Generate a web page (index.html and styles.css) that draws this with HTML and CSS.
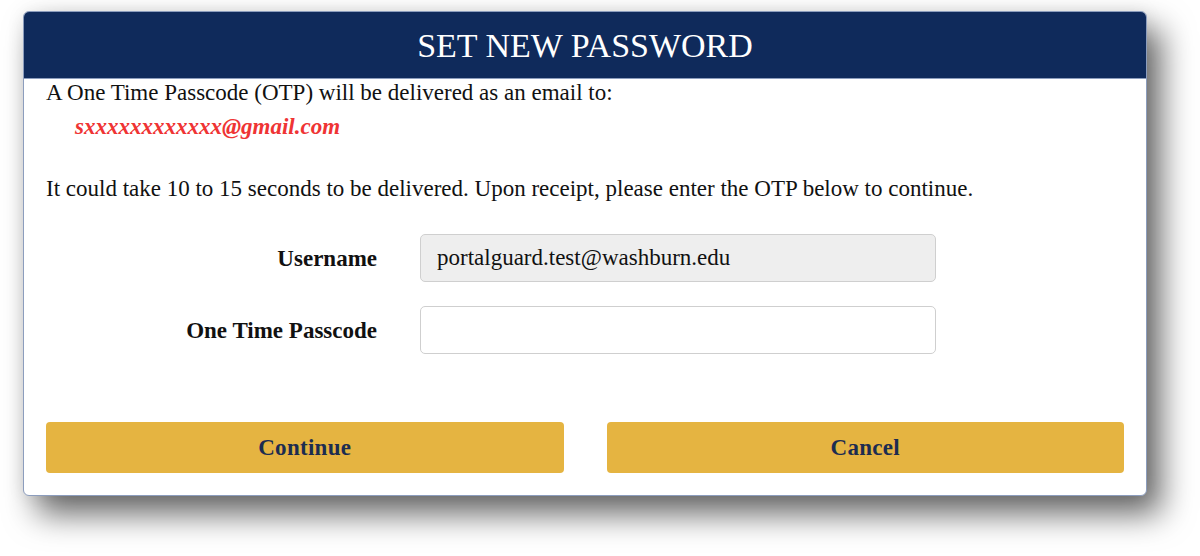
FILE: index.html
```html
<!DOCTYPE html>
<html lang="en">

<head>
    <meta charset="utf-8">
    <meta name="viewport" content="width=device-width, initial-scale=1.0">
    <title>Set New Password</title>
    <link rel="stylesheet" href="styles.css">
</head>

<body>
    <div class="dialog">
        <!-- titel -->
        <div class="dialog-head">
            <h1>SET NEW PASSWORD</h1>
        </div>

        <div class="dialog-body">
            <p class="notice">A One Time Passcode (OTP) will be delivered as an email to:</p>
            <p class="email">sxxxxxxxxxxxx@gmail.com</p>
            <p class="notice wait">It could take 10 to 15 seconds to be delivered. Upon receipt, please enter the OTP below to continue.</p>

            <!-- felter -->
            <form class="fields">
                <label for="username">Username</label>
                <input class="field locked" id="username" type="text" value="portalguard.test@washburn.edu" readonly>

                <label for="otp">One Time Passcode</label>
                <input class="field" id="otp" type="text">
            </form>

            <div class="knapper">
                <button class="knap">Continue</button>
                <button class="knap">Cancel</button>
            </div>
        </div>
    </div>
</body>

</html>
```

FILE: styles.css
```css
        html {
            background-color: #ffffff;
        }

        body {
            margin: 0;
            padding: 11px 0 0 23px;
            min-height: 556px;
            box-sizing: border-box;
            background-color: #ffffff;
            font-family: "Liberation Serif", "Times New Roman", serif;
            color: #111111;
        }

        .dialog {
            width: 1124px;
            box-sizing: border-box;
            border: 1px solid #8c9dbd;
            border-radius: 6px;
            background-color: #ffffff;
            overflow: hidden;
            box-shadow: 14px 18px 32px rgba(0, 0, 0, 0.6), 0 0 18px rgba(0, 0, 0, 0.08);
        }

        .dialog-head {
            background-color: #0f2a5b;
            height: 66px;
            border-bottom: 1px solid #8c9dbd;
            display: flex;
            align-items: center;
            justify-content: center;
        }

        .dialog-head h1 {
            margin: 2px 0 0 0;
            font-size: 34px;
            font-weight: normal;
            color: #ffffff;
        }

        .dialog-body {
            padding: 1px 22px 22px 22px;
        }

        p {
            margin: 0;
            font-size: 23px;
            line-height: 25px;
        }

        .email {
            margin-top: 9px;
            padding-left: 29px;
            color: #ef3434;
            font-style: italic;
            font-weight: bold;
        }

        .wait {
            margin-top: 37px;
        }

        .fields {
            margin: 33px 0 0 0;
            display: grid;
            grid-template-columns: 331px 516px;
            column-gap: 43px;
            row-gap: 24px;
            align-items: center;
        }

        .fields label {
            text-align: right;
            font-size: 23px;
            font-weight: bold;
            padding-top: 2px;
        }

        .field {
            height: 48px;
            box-sizing: border-box;
            border: 1px solid #cfcfcf;
            border-radius: 5px;
            padding: 0 16px;
            font-family: "Liberation Serif", "Times New Roman", serif;
            font-size: 23px;
            color: #111111;
            background-color: #ffffff;
        }

        .locked {
            background-color: #eeeeee;
        }

        .knapper {
            margin-top: 68px;
            display: grid;
            grid-template-columns: 1fr 1fr;
            column-gap: 43px;
        }

        .knap {
            height: 51px;
            border: none;
            border-radius: 4px;
            background-color: #e5b441;
            color: #1c2c50;
            font-family: "Liberation Serif", "Times New Roman", serif;
            font-size: 23px;
            font-weight: bold;
            letter-spacing: 0.3px;
        }
```
